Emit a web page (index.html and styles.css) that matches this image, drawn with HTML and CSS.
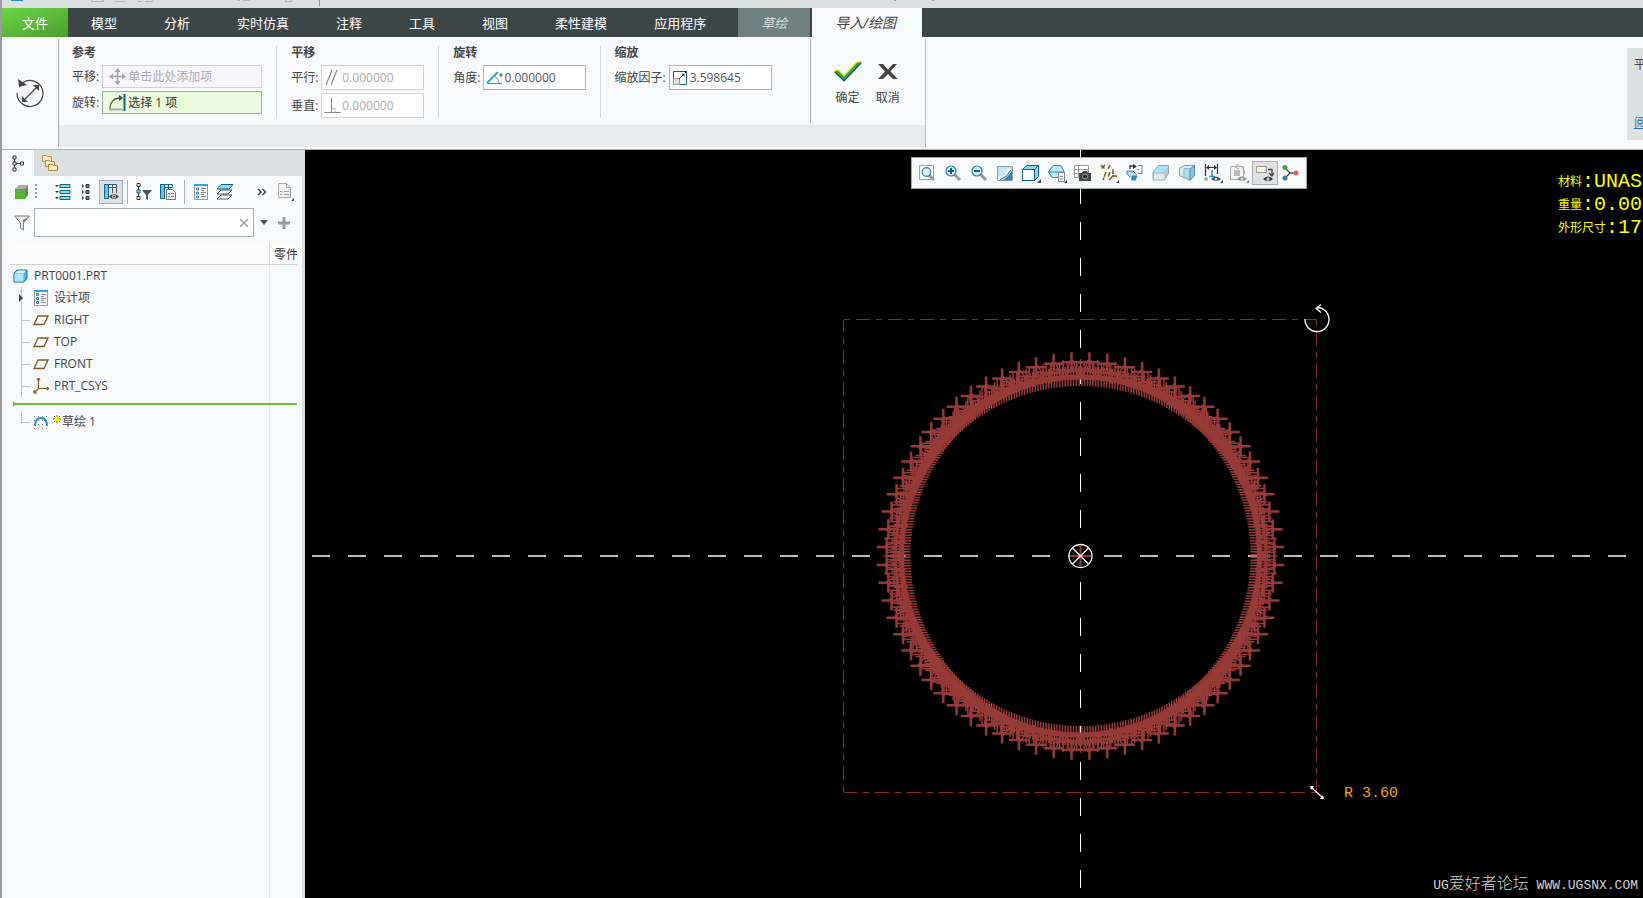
FILE: index.html
```
<!DOCTYPE html>
<html lang="zh-CN">
<head>
    <meta charset="UTF-8">
    <meta name="viewport" content="width=device-width, initial-scale=1.0">
    <title>PRT0001</title>
    <link rel="stylesheet" href="styles.css">
</head>
<body>
    <div class="quick-bar">
        <svg width="960" height="8" aria-hidden="true">
            <path d="M11 0h12v1H11z" fill="#2b8fc0"/>
            <path d="M91.500 0v1.500h12V0M114 1.500h12M138.500 0v1.500h4M145 1.500h8V0M237 .5h3M243 .5h7M285.500 0v1.500h6V0" fill="none" stroke="#b0b4b5"/>
            <path d="M319.500 0v6" stroke="#8d9494"/>
            <path d="M895 0v1M933 0v1" stroke="#555"/>
        </svg>
    </div>

    <nav class="tabs">
        <button class="tab file">文件</button>
        <button class="tab">模型</button>
        <button class="tab">分析</button>
        <button class="tab">实时仿真</button>
        <button class="tab">注释</button>
        <button class="tab">工具</button>
        <button class="tab">视图</button>
        <button class="tab">柔性建模</button>
        <button class="tab">应用程序</button>
        <button class="tab sketch">草绘</button>
        <button class="tab active">导入/绘图</button>
    </nav>

    <header class="ribbon">
        <div class="mode">
            <svg width="30" height="32" viewBox="0 0 30 32" aria-hidden="true">
                <path d="M2 16a13 13 0 1 0 6-10.500" fill="none" stroke="#444" stroke-width="1.200"/>
                <path d="M3 2l9 6-8 2z" fill="#444"/>
                <path d="M10 22L21 11" stroke="#444" stroke-width="1.200"/>
                <path d="M7 25v-6l6 6zM24 8v6l-6-6z" fill="#444"/>
            </svg>
        </div>
        <div class="dashboard">
            <div class="groups">
                <section class="group">
                    <h2>参考</h2>
                    <div class="line">
                        <label for="ref-move">平移:</label>
                        <span class="field wide empty">
                            <svg width="17" height="17" viewBox="0 0 17 17"><path d="M8.500 2v13M2 8.500h13" stroke="#a2a4a8" stroke-width="1.500"/><path d="M8.500 0l3 4h-6zM8.500 17l3-4h-6zM0 8.500l4-3v6zM17 8.500l-4-3v6z" fill="#a2a4a8"/></svg>
                            <input id="ref-move" type="text" value="单击此处添加项">
                        </span>
                    </div>
                    <div class="line">
                        <label for="ref-turn">旋转:</label>
                        <span class="field wide picked">
                            <svg width="17" height="17" viewBox="0 0 17 17"><path d="M1 15c0-7 4-11 10-11" fill="none" stroke="#555" stroke-width="1.300"/><path d="M10 1l4 3-4 3z" fill="#444"/><path d="M15.500 0v17" stroke="#116088" stroke-width="2"/><path d="M0 15.500h14" stroke="#aaa" stroke-width="2"/></svg>
                            <input id="ref-turn" type="text" value="选择 1 项">
                        </span>
                    </div>
                </section>
                <section class="group">
                    <h2>平移</h2>
                    <div class="line">
                        <label for="parallel">平行:</label>
                        <span class="field off">
                            <svg width="17" height="17" viewBox="0 0 17 17"><path d="M2 16L8 1M7 16l6-15" stroke="#888" stroke-width="1.200"/></svg>
                            <input id="parallel" type="text" value="0.000000" disabled>
                        </span>
                    </div>
                    <div class="line">
                        <label for="vertical">垂直:</label>
                        <span class="field off">
                            <svg width="17" height="17" viewBox="0 0 17 17"><path d="M0 15.500h17M7.500 1v14" stroke="#888"/><path d="M8 11.500h3v4" fill="none" stroke="#bbb"/></svg>
                            <input id="vertical" type="text" value="0.000000" disabled>
                        </span>
                    </div>
                </section>
                <section class="group">
                    <h2>旋转</h2>
                    <div class="line">
                        <label for="angle">角度:</label>
                        <span class="field">
                            <svg width="17" height="17" viewBox="0 0 17 17"><path d="M1 14.500h15" stroke="#777"/><path d="M1 14L12 3" stroke="#33a3dc" stroke-width="2"/><path d="M9 7q4 3 4 7" fill="none" stroke="#999"/><circle cx="15" cy="6" r="1.200" fill="none" stroke="#444"/></svg>
                            <input id="angle" type="text" value="0.000000">
                        </span>
                    </div>
                </section>
                <section class="group">
                    <h2>缩放</h2>
                    <div class="line">
                        <label for="scale">缩放因子:</label>
                        <span class="field">
                            <svg width="17" height="17" viewBox="0 0 17 17"><path d="M1.500 2.500h13v13h-13z" fill="#fff" stroke="#116088"/><path d="M1.500 9.500h6v6h-6z" fill="#e4e4e4" stroke="#999"/><path d="M7 10l5-5" stroke="#333"/><path d="M12.500 4.500v3L9.500 4.500zM13 2h2v2h-2z" fill="#222"/></svg>
                            <input id="scale" type="text" value="3.598645">
                        </span>
                    </div>
                </section>
                <div class="confirm">
                    <button>
                        <svg width="28" height="24" viewBox="0 0 28 24"><path d="M0 12l4-2 6 6L23 2h5L10 21z" fill="#3d9a68"/><path d="M0 11l4-1 6 6L23 2h5" fill="none" stroke="#cfe600" stroke-width="1.200"/><path d="M1 12l9 9L27 3" fill="none" stroke="#1d5c3a" stroke-width="1.200"/></svg>
                        确定
                    </button>
                    <button>
                        <svg width="20" height="24" viewBox="0 0 20 24"><path d="M0 4h5l5 5.500L15 4h4l-6.500 7.500L20 19h-5l-5-5-5 5H0l7-7.500z" fill="#444"/></svg>
                        取消
                    </button>
                </div>
            </div>
        </div>
        <aside class="tip">
            <span>平</span>
            <a href="#">阅</a>
        </aside>
    </header>

    <main class="work">
        <div class="side">
            <div class="side-tabs">
                <button class="side-tab on" aria-label="模型树">
                    <svg width="14" height="18" viewBox="0 0 14 18"><path d="M3.500 3v11M4 9.500h7" stroke="#444"/><path d="M2 2h3v3H2zM2 8h3v3H2zM2 14h3v3H2zM9.500 8h3v3h-3z" fill="#fff" stroke="#333"/></svg>
                </button>
                <button class="side-tab" aria-label="文件夹">
                    <svg width="18" height="18" viewBox="0 0 18 18"><g fill="#fce9c0" stroke="#b58a3c"><path d="M1.500 1.500h4l1 1h4v5h-9z"/><path d="M4.500 6.500h4l1 1h4v5h-9z"/><path d="M7.500 10.500h4l1 1h4v5h-9z"/></g></svg>
                </button>
            </div>

            <div class="side-tools">
                <button aria-label="模型"><svg width="22" height="18" viewBox="0 0 22 18"><path d="M0 6l4-4h9l-3 4z" fill="#aaa"/><path d="M10 6l3-4v10l-3 4z" fill="#777"/><path d="M0 6h10v10H0z" fill="#55b435"/><path d="M21 1v16" stroke="#999" stroke-width="2" stroke-dasharray="2 2"/></svg></button>
                <button class="after-gap" aria-label="展开"><svg width="18" height="18" viewBox="0 0 18 18"><path d="M6 1.500h10v3H6zM6 7.500h10v3H6zM6 13.500h10v3H6z" fill="#8fd6f5" stroke="#116088"/><path d="M1 2h4L3 4zM1 8h4l-2 2zM1 14h4l-2 2z" fill="#333"/></svg></button>
                <button aria-label="折叠"><svg width="18" height="18" viewBox="0 0 18 18"><path d="M8 1.500h3v3H8zM8 7.500h3v3H8zM8 13.500h3v3H8z" fill="#777" stroke="#333"/><path d="M4 1l2 2-2 2zM4 7l2 2-2 2zM4 13l2 2-2 2z" fill="#333"/></svg></button>
                <button class="pressed" aria-label="树列"><svg width="18" height="18" viewBox="0 0 18 18"><path d="M2.500 1.500h12v3h-12z" fill="#fff" stroke="#116088"/><path d="M2.500 1.500h4v14h-4z" fill="#5fc4ef" stroke="#116088"/><path d="M6.500 4.500h8V10M10.500 2v8" fill="none" stroke="#555"/><path d="M7 13.500q5-5 10 0-5 5-10 0z" fill="#444"/><circle cx="12" cy="13.500" r="2" fill="#ddd"/><circle cx="12" cy="13.500" r="1" fill="#333"/></svg></button>
                <span class="bar"></span>
                <button aria-label="树过滤器"><svg width="18" height="18" viewBox="0 0 18 18"><path d="M3.500 3v12" stroke="#333"/><path d="M2 .5h3v3H2zM2 13.500h3v3H2z" fill="#fff" stroke="#333"/><path d="M2 7h3v3H2z" fill="#8fd6f5" stroke="#116088"/><path d="M7 7h10l-4 5v5l-2-1v-4z" fill="#555"/></svg></button>
                <button aria-label="树设置"><svg width="18" height="18" viewBox="0 0 18 18"><path d="M1.500 1.500h12v3h-12z" fill="#d8f1fb" stroke="#116088"/><path d="M1.500 1.500h4v14h-4z" fill="#5fc4ef" stroke="#116088"/><path d="M9.500 2v5" stroke="#116088"/><path d="M7.500 6.500h6l3 3v7h-9z" fill="#f4f4f4" stroke="#777"/><path d="M9 10.500h2M12 10.500h3M9 13.500h2M12 13.500h3" stroke="#777"/></svg></button>
                <span class="bar"></span>
                <button aria-label="设计项"><svg width="18" height="18" viewBox="0 0 18 18"><path d="M2.500 1.500h13v15h-13z" fill="#fff" stroke="#999"/><path d="M2 2h14" stroke="#2ea3dc" stroke-width="2"/><path d="M4.500 5h2v2h-2zM4.500 9h2v2h-2zM4.500 13h2v2h-2z" fill="none" stroke="#2183b5"/><path d="M9 5.500h5M9 7.500h3M9 9.500h5M9 11.500h3M9 13.500h5" stroke="#888"/></svg></button>
                <button aria-label="层树"><svg width="18" height="18" viewBox="0 0 18 18"><path d="M1 16l4-4h11l-4 4zM1 11l4-4h11l-4 4z" fill="#fff" stroke="#555"/><path d="M1 6l4-4.500h12L13 6z" fill="#8fdcf8" stroke="#116088"/></svg></button>
                <button class="more" aria-label="更多"><svg width="10" height="8" viewBox="0 0 10 8"><path d="M1 1l3 3-3 3M5.500 1l3 3-3 3" fill="none" stroke="#333" stroke-width="1.300"/></svg></button>
                <button class="last" aria-label="显示"><svg width="18" height="20" viewBox="0 0 18 20"><path d="M1.500 1.500h8l4 4v10h-12z" fill="#f4f4f4" stroke="#a8a8a8"/><path d="M9.500 1.500v4h4" fill="none" stroke="#a8a8a8"/><path d="M3 9.500h2M7 9.500h5M3 12.500h2M7 12.500h5" stroke="#999"/><path d="M17 16v3h-3z" fill="#444"/></svg></button>
            </div>

            <div class="search">
                <svg width="18" height="18" viewBox="0 0 18 18"><path d="M1.500 2h15l-6 7v7l-3-2V9z" fill="#eee" stroke="#777"/><path d="M10 9l5-6-5 3z" fill="#777"/></svg>
                <span class="search-box">
                    <input type="text" aria-label="搜索">
                    <button aria-label="清除"><svg width="8" height="8" viewBox="0 0 8 8"><path d="M0 0l8 8M8 0L0 8" stroke="#999" stroke-width="1.300"/></svg></button>
                </span>
                <button aria-label="选项"><svg width="8" height="5"><path d="M0 0h8L4 5z" fill="#555"/></svg></button>
                <button class="plus" aria-label="添加"><svg width="12" height="12"><path d="M6 0v12M0 6h12" stroke="#9b9b9b" stroke-width="3"/></svg></button>
            </div>

            <div class="tree">
                <div class="tree-head"><span></span><span class="col">零件</span></div>
                <ul class="nodes">
                    <li class="root">
                        <svg width="16" height="16" viewBox="0 0 16 16"><path d="M1 5l3-3h10v8l-3 4H1z" fill="#4fb4dd" stroke="#136a94"/><path d="M1.500 5.500h9v8h-9z" fill="#a8e6fb"/><path d="M2 5l3-2.500h8L11 5z" fill="#d7f5ff"/></svg>
                        PRT0001.PRT
                    </li>
                    <li class="node parent">
                        <svg width="16" height="16" viewBox="0 0 16 16"><path d="M1.500 .5h13v15h-13z" fill="#fff" stroke="#999"/><path d="M1 1h14" stroke="#2ea3dc" stroke-width="2"/><path d="M3.500 3.500h2v2h-2zM3.500 7.500h2v2h-2zM3.500 11.500h2v2h-2z" fill="none" stroke="#2183b5"/><path d="M8 4.500h5M8 6.500h3M8 8.500h5M8 10.500h3M8 12.500h5" stroke="#888"/></svg>
                        设计项
                    </li>
                    <li class="node"><svg width="16" height="16" viewBox="0 0 16 16"><path d="M1 12.500L5 4h10l-4 8.500z" fill="none" stroke="#7d5c22" stroke-width="1.300"/></svg>RIGHT</li>
                    <li class="node"><svg width="16" height="16" viewBox="0 0 16 16"><path d="M1 12.500L5 4h10l-4 8.500z" fill="none" stroke="#7d5c22" stroke-width="1.300"/></svg>TOP</li>
                    <li class="node"><svg width="16" height="16" viewBox="0 0 16 16"><path d="M1 12.500L5 4h10l-4 8.500z" fill="none" stroke="#7d5c22" stroke-width="1.300"/></svg>FRONT</li>
                    <li class="node"><svg width="16" height="16" viewBox="0 0 16 16"><path d="M5.500 0v10.500H16M5.500 10.500L1 15M4 2l1.500-2L7 2M14 9l2 1.500-2 1.500M1 12v3h3" fill="none" stroke="#7d5c22" stroke-width="1.200"/></svg>PRT_CSYS</li>
                </ul>
                <div class="insert-here"></div>
                <ul class="nodes">
                    <li class="node end">
                        <svg width="24" height="16" viewBox="0 0 24 16"><path d="M1 2.500h14M1 6.500h14M1 10.500h14M1 14.500h14" stroke="#888" stroke-dasharray="1 3"/><path d="M2 12q0-8 6-8t6 8" fill="none" stroke="#2590c4" stroke-width="2"/></svg>草绘 1
                        <svg class="spark" width="8" height="8" viewBox="0 0 8 8"><path d="M4 0v8M0 4h8M1 1l6 6M7 1L1 7" stroke="#6a5e00" stroke-width="1"/><path d="M2 2h4v4H2z" fill="#ffee00"/></svg>
                    </li>
                </ul>
            </div>
        </div>

        <div class="graphics">
            <svg class="model" width="100%" height="100%" aria-label="草绘图形">
                <g stroke-dasharray="18" shape-rendering="crispEdges">
                    <path d="M775.500 0V2000" stroke="#fff"/>
                    <path d="M7 406H4000" stroke="#bdbdbd" stroke-width="2"/>
                </g>
                <g fill="none" stroke="#8c2f2d" stroke-width="1" shape-rendering="crispEdges">
                    <path d="M539 169.500h473" stroke-dasharray="6 6 14 6"/>
                    <path d="M1011.500 170v473" stroke-dasharray="6 6 14 6"/>
                    <path d="M539 642.500h473" stroke-dasharray="14 6 6 6" stroke-dashoffset="1"/>
                    <path d="M538.500 170v473" stroke-dasharray="14 6 6 6" stroke-dashoffset="2"/>
                </g>
                <g fill="none" stroke="#963a38">
                    <circle cx="775.500" cy="406" r="179" stroke-width="5"/>
                    <path id="outline" stroke-width="1.500"/>
                    <path id="points" stroke-width="1.500"/>
                    <path id="tips" stroke-width="2.500"/>
                </g>
                <circle cx="775.500" cy="406" r="11.500" fill="#000" stroke="#fff" stroke-width="1.300"/>
                <path d="M775.500 396v20M765 406h21" stroke="#963a38" stroke-width="2"/>
                <path d="M767.500 398l16 16M783.500 398l-16 16" stroke="#fff" stroke-width="1.300"/>
                <path d="M1000 169a12 12 0 1 0 12-11.500M1016 154.500l-5 4 5 4" fill="none" stroke="#fff" stroke-width="1.300"/>
                <path d="M1007 638l10 9" stroke="#fff" stroke-width="1.300"/>
                <path d="M1005 636h4l-3 4zM1019 649h-4l3-4z" fill="#fff"/>
                <text class="radius" x="1039" y="647">R 3.60</text>
            </svg>

            <div class="view-bar">
                <button aria-label="重新调整"><svg width="20" height="20" viewBox="0 0 20 20"><path d="M2.500 2.500h14v14h-14z" fill="#fff" stroke="#9aa4a8"/><path d="M12 12l5 5" stroke="#999" stroke-width="3"/><circle cx="9.500" cy="9" r="4.300" fill="#d8f2fc" stroke="#2b7fa5" stroke-width="1.200"/></svg></button>
                <button aria-label="放大"><svg width="20" height="20" viewBox="0 0 20 20"><path d="M11 11l6 6" stroke="#999" stroke-width="3"/><circle cx="8" cy="8" r="5" fill="#d8f2fc" stroke="#2b7fa5" stroke-width="1.200"/><path d="M5 8h6M8 5v6" stroke="#115f88" stroke-width="2"/></svg></button>
                <button aria-label="缩小"><svg width="20" height="20" viewBox="0 0 20 20"><path d="M11 11l6 6" stroke="#999" stroke-width="3"/><circle cx="8" cy="8" r="5" fill="#d8f2fc" stroke="#2b7fa5" stroke-width="1.200"/><path d="M5 8h6" stroke="#115f88" stroke-width="2"/></svg></button>
                <button aria-label="重画"><svg width="20" height="20" viewBox="0 0 20 20"><path d="M2.500 3.500h15v14h-15z" fill="#c3e6f5" stroke="#8b999e"/><path d="M8 17q6-4 9-9v9z" fill="#2f86ac"/><path d="M3 16q9-3 12-10" fill="none" stroke="#fff" stroke-width="3"/><path d="M5 17q8-4 11-10" fill="none" stroke="#1f6a8e"/></svg></button>
                <button aria-label="显示样式"><svg width="20" height="20" viewBox="0 0 20 20"><path d="M1.500 6.500l4-4h12v11l-4 4h-12z" fill="#8ed3ee" stroke="#115f88"/><path d="M1.500 6.500h12v11h-12z" fill="#fff" stroke="#115f88"/><path d="M13.500 6.500l4-4" stroke="#115f88"/><path d="M20 16v4h-4z" fill="#444"/></svg></button>
                <button aria-label="已保存方向"><svg width="20" height="20" viewBox="0 0 20 20"><path d="M6 2.500h8l3.500 7-3.500 5H5L1.500 9z" fill="#b7e9fa" stroke="#2b88b0"/><path d="M1.500 9H17" fill="none" stroke="#2b88b0"/><path d="M11.500 9.500h6v9h-6z" fill="#f5f5f5" stroke="#888"/><path d="M13 13.500h3M13 16h3" stroke="#888"/><path d="M20 17v3h-3z" fill="#444"/></svg></button>
                <button aria-label="视图管理器"><svg width="20" height="20" viewBox="0 0 20 20"><path d="M1.500 2.500h14v12h-14zM2 6.500h13M2 10.500h13M5.500 3v12" fill="#fff" stroke="#999"/><path d="M6 10h3l1-2h4l1 2h3v8H6z" fill="#444"/><circle cx="12" cy="13.500" r="2.500" fill="#222" stroke="#aaa"/></svg></button>
                <button aria-label="基准显示"><svg width="20" height="20" viewBox="0 0 20 20"><path d="M2 2l4 4M6 2L2 6M11 2l-2 4M7 9l-3 8M11 9l-2 5M10 17l4-4M14 6v7h5" fill="none" stroke="#7d5c22" stroke-width="1.500" stroke-dasharray="5 1"/><path d="M20 17v3h-3z" fill="#444"/></svg></button>
                <button aria-label="旋转中心"><svg width="20" height="20" viewBox="0 0 20 20"><path d="M5 6V3h4" fill="none" stroke="#333" stroke-width="1.300"/><path d="M8 1l4 2.500L8 6z" fill="#333"/><path d="M13 2.500h4v8h-4M12 6.500h2" fill="none" stroke="#888"/><path d="M2 8h6l4 4v3H6l-4-4z" fill="#a6def5" stroke="#2b88b0"/><path d="M6 12h7l-2 6H6z" fill="#2b88b0" stroke="#d4f2fd"/></svg></button>
                <button aria-label="实体"><svg width="20" height="20" viewBox="0 0 20 20"><path d="M2 9l5-6.500h10.500V10l-4 7H2z" fill="#b5cdd8" stroke="#8ba5b0"/><path d="M2.500 9L7 3h10l-4 6z" fill="#a6e3f7"/><path d="M3 11h10v5.500H3z" fill="#e1e9ec"/></svg></button>
                <button aria-label="透视图"><svg width="20" height="20" viewBox="0 0 20 20"><path d="M2.500 5l5-2.500h10v10L13 17.500l-10.500-5z" fill="#d4eef8" stroke="#6fa6bd"/><path d="M7 5.500h6v11L7 14z" fill="#b4dcec" stroke="#8fbdd0"/><path d="M13 6l4.500-3.500v10L13 17z" fill="#8cc4dc" stroke="#4f91ac"/></svg></button>
                <button aria-label="注释显示"><svg width="20" height="20" viewBox="0 0 20 20"><path d="M2.500 1v12M14.500 1v10M4 4.500h9" stroke="#333" stroke-width="1.200"/><path d="M3 4.500L6 2v5zM14 4.500L11 2v5z" fill="#333"/><path d="M9 7v6M6 13.500h6" stroke="#1a92cf" stroke-width="1.500"/><circle cx="3" cy="16" r="2" fill="#aaa"/><path d="M8 16q5-5 10 0-5 4-10 0z" fill="#444"/><circle cx="13" cy="16" r="1.500" fill="#ddd"/><path d="M20 17v3h-3z" fill="#444"/></svg></button>
                <button aria-label="模拟显示"><svg width="20" height="20" viewBox="0 0 20 20"><path d="M1.500 3.500h13v13h-13z" fill="#f5f5f5" stroke="#aaa"/><path d="M5 7h6v6H5z" fill="#bbb"/><path d="M8 3q7-1 8 8M9 1L6 4l4 2" fill="none" stroke="#aaa"/><path d="M8 16q5-5 10 0-5 4-10 0z" fill="#888"/><circle cx="13" cy="16" r="1.500" fill="#ddd"/><path d="M20 17v3h-3z" fill="#777"/></svg></button>
                <button class="pressed" aria-label="草绘显示"><svg width="20" height="20" viewBox="0 0 20 20"><path d="M1.500 3.500h10v6h-10z" fill="#fff3cf" stroke="#999"/><path d="M13 6.500h4v6M14 10l3 3 2-3" fill="none" stroke="#444" stroke-width="1.300"/><path d="M8 16q5-5 10 0-5 4-10 0z" fill="#333"/><circle cx="13" cy="16" r="1.500" fill="#ddd"/></svg></button>
                <button aria-label="连接"><svg width="20" height="20" viewBox="0 0 20 20"><path d="M4 5l5 5-5 5M9 10h6" fill="none" stroke="#444" stroke-width="1.300"/><circle cx="4" cy="4.500" r="2.500" fill="#4b9c4b"/><circle cx="4" cy="15" r="2.500" fill="#2b7fa5"/><circle cx="15" cy="10" r="2.500" fill="#e0605c"/></svg></button>
            </div>

            <div class="mass">
                <div>材料<b>:UNAS</b></div>
                <div>重量<b>:0.00</b></div>
                <div>外形尺寸<b>:17</b></div>
            </div>
            <div class="site"><span>UG</span>爱好者论坛<span> WWW.UGSNX.COM</span></div>
        </div>
    </main>

    <script>
        // imported gear: tooth outline plus a small upright cross on every sketch point
        const teeth = 68, cx = 775.5, cy = 406, arm = 10;

        function at(i, t, r) {
            const a = (i + 0.5 + t) * 2 * Math.PI / teeth;
            return [cx + r * Math.sin(a), cy - r * Math.cos(a)];
        }
        function cross([x, y]) {
            return `M${x - arm} ${y}h${arm * 2}M${x} ${y - arm}v${arm * 2}`;
        }

        const roots = [-0.42, -0.25, -0.08, 0.08, 0.25, 0.42];
        const flanks = [-0.28, 0.28];
        let outline = "", points = "", tips = "";
        for (let i = 0; i < teeth; i++) {
            outline += `M${at(i, -0.4, 180)}L${at(i, -0.1, 195)}L${at(i, 0.1, 195)}L${at(i, 0.4, 180)}`;
            roots.forEach(t => points += cross(at(i, t, 180)));
            flanks.forEach(t => points += cross(at(i, t, 185)));
            points += cross(at(i, 0.5, 187));
            tips += cross(at(i, 0, 194));
        }
        document.getElementById("outline").setAttribute("d", outline);
        document.getElementById("points").setAttribute("d", points);
        document.getElementById("tips").setAttribute("d", tips);
    </script>
</body>
</html>
```
FILE: styles.css
```
* {
    box-sizing: border-box;
}
body {
    display: flex;
    flex-direction: column;
    height: 100vh;
    margin: 0;
    border-left: 2px solid #9c9c9e;
    background: #f8f9fb;
    color: #444;
    font-family: "Open Sans", "Noto Sans CJK SC", sans-serif;
    font-size: 12px;
    line-height: 16px;
    overflow: hidden;
}
button {
    padding: 0;
    border: none;
    background: none;
    color: inherit;
    font: inherit;
}
svg {
    display: block;
    flex: none;
}
h2, ul {
    margin: 0;
    padding: 0;
}
.quick-bar {
    height: 8px;
    margin-left: -2px;
    background: #d9e0df;
}

/* tabs */
.tabs {
    display: flex;
    flex: none;
    gap: 1px;
    height: 29px;
    background: #3d4647;
}
.tab {
    padding: 0 23px;
    color: #fff;
    font-size: 13px;
    white-space: nowrap;
}
.tab.file {
    margin-right: -1px;
    padding: 0 20px;
    background: linear-gradient(160deg, #69d743, #4e9d30);
}
.tab.sketch {
    margin-left: 8px;
    background: #6f8081;
    color: #d5dcdc;
    font-style: italic;
}
.tab.active {
    margin-left: 1px;
    padding: 0 26px 0 23px;
    background: #f8f9fb;
    color: #444;
    font-size: 14px;
    font-style: italic;
}

/* ribbon */
.ribbon {
    display: flex;
    flex: none;
    height: 113px;
    border-bottom: 1px solid #a9b5b5;
}
.mode {
    display: flex;
    align-items: center;
    justify-content: center;
    width: 57px;
    margin: 2px 0;
    border-right: 1px solid #aaa;
}
.dashboard {
    margin: 2px 0;
    padding: 0 1px;
    border-right: 1px solid #b5b8ba;
    background: linear-gradient(#f8f9fb 86px, #e9eaeb 86px);
}
.groups {
    display: flex;
    height: 84px;
}
.group {
    position: relative;
    padding: 6px 14px 0 12px;
}
.group + .group {
    padding: 6px 14px 0;
}
.group:not(:nth-child(4)) {
    border-right: 1px solid transparent;
    border-image: linear-gradient(transparent 8px, #d5d8db 8px, #d5d8db 78px, transparent 78px) 1;
}
.group:nth-child(4) {
    padding: 6px 38px 0 13px;
}
.group h2 {
    margin-bottom: 4px;
    font-size: 12px;
    line-height: 16px;
}
.line {
    display: flex;
    align-items: center;
    gap: 3px;
    margin-bottom: 3px;
}
.field {
    display: flex;
    align-items: center;
    gap: 1px;
    width: 103px;
    height: 25px;
    padding: 0 2px;
    border: 1px solid #b0b2b4;
    background: #fff;
}
.field input {
    width: 100%;
    min-width: 0;
    padding: 0;
    border: none;
    background: none;
    color: #555;
    font: inherit;
}
.field.off {
    border-color: #cfd1d3;
}
.field.off input {
    color: #aaa;
}
.field.wide {
    gap: 2px;
    width: 160px;
    height: 23px;
    padding: 0 6px;
}
.field.empty {
    border-color: #cfd1d3;
    background: #f8f5fc;
}
.field.empty input {
    color: #aaa;
}
.field.picked {
    border-color: #a6a9ab;
    background: #eafbdd;
}
.field.picked input {
    color: #333;
}
.confirm {
    display: flex;
    gap: 14px;
    padding: 21px 24px 0 23px;
    border-left: 1px solid #aaa;
}
.confirm button {
    display: flex;
    flex-direction: column;
    align-items: center;
    gap: 6px;
}
.tip {
    display: flex;
    flex-direction: column;
    justify-content: space-between;
    width: 16px;
    margin: 11px 0 9px auto;
    padding: 9px 0 9px 7px;
    background: #dfe0e2;
    overflow: hidden;
}
.tip a {
    color: #1a6fa8;
}

/* model tree */
.work {
    display: flex;
    flex: 1;
    min-height: 0;
}
.side {
    display: flex;
    flex: none;
    flex-direction: column;
    width: 303px;
    border-right: 3px solid #d9e0df;
}
.side-tabs {
    display: flex;
    height: 26px;
    margin-right: -3px;
    background: #d9e0df;
}
.side-tab {
    display: flex;
    align-items: center;
    justify-content: center;
    width: 32px;
}
.side-tab.on {
    background: #f8f9fb;
}
.side-tools {
    display: flex;
    align-items: center;
    height: 32px;
    padding-left: 12px;
}
.side-tools button {
    display: flex;
    flex: none;
    align-items: center;
    justify-content: center;
    width: 24px;
    height: 24px;
}
.side-tools .after-gap {
    margin-left: 13px;
}
.side-tools .bar {
    flex: none;
    width: 1px;
    height: 24px;
    margin: 0 4px;
    background: #a9b0b3;
}
.side-tools .more {
    margin-left: 13px;
}
.side-tools .last {
    margin-left: auto;
    margin-right: 4px;
}
.pressed {
    border: 1px solid #a9adb0;
    background: #dfe0e2;
}
.search {
    display: flex;
    align-items: center;
    height: 29px;
    padding-left: 11px;
    gap: 6px;
}
.search-box {
    display: flex;
    align-items: center;
    width: 220px;
    height: 29px;
    margin-left: -3px;
    padding-right: 5px;
    border: 1px solid #a3aeb3;
    background: #fff;
}
.search-box input {
    flex: 1;
    min-width: 0;
    border: none;
    background: none;
}
.search .plus {
    margin-left: 4px;
}
.tree {
    flex: 1;
    margin: 5px 5px 0 8px;
    background: linear-gradient(#e6e8ea, #e6e8ea) 259px 0 / 1px 100% no-repeat;
}
.tree-head {
    display: flex;
    height: 23px;
    border-bottom: 1px solid #cfd2d4;
    background: #fbfbfb;
    color: #333;
    overflow: hidden;
}
.tree-head span:first-child {
    flex: none;
    width: 260px;
    border-right: 1px solid #cfd2d4;
}
.tree-head .col {
    padding: 5px 0 0 4px;
    white-space: nowrap;
}
.nodes {
    list-style: none;
}
.nodes li {
    display: flex;
    align-items: center;
    height: 22px;
}
.nodes .root {
    gap: 5px;
    padding-left: 3px;
}
.nodes .node {
    position: relative;
    gap: 5px;
    padding-left: 23px;
}
.node::before {
    content: "";
    position: absolute;
    left: 11px;
    top: 0;
    width: 1px;
    height: 100%;
    background: #c2c5c7;
}
.node::after {
    content: "";
    position: absolute;
    left: 11px;
    top: 11px;
    width: 9px;
    height: 1px;
    background: #c2c5c7;
}
.node.parent::after {
    left: 9px;
    top: 7px;
    width: 0;
    height: 0;
    border: 4px solid transparent;
    border-left-color: #444;
    background: none;
}
.node.end::before {
    height: 11px;
}
.nodes .end {
    gap: 5px;
}
.spark {
    position: absolute;
    left: 43px;
    top: 4px;
}
.insert-here {
    height: 2px;
    margin: 6px 0 6px 3px;
    background: #62c044;
}
.insert-here::before {
    content: "";
    display: block;
    width: 0;
    border: 3px solid transparent;
    border-left-color: #62c044;
    transform: translateY(-2px);
}

/* graphics window */
.graphics {
    position: relative;
    flex: 1;
    min-width: 0;
    background: #000;
    overflow: hidden;
}
.model {
    position: absolute;
    inset: 0;
}
.radius {
    fill: #f2a600;
    font-family: "Liberation Mono", monospace;
    font-size: 15px;
}
.view-bar {
    position: absolute;
    left: 606px;
    top: 7px;
    display: flex;
    align-items: center;
    height: 32px;
    padding: 0 2px;
    border: 1px solid #a5acac;
    background: #f8f9fb;
}
.view-bar button {
    display: flex;
    align-items: center;
    justify-content: center;
    width: 26px;
    height: 24px;
}
.mass {
    position: absolute;
    right: 0;
    top: 20px;
    width: 85px;
    color: #ffff00;
    white-space: nowrap;
    overflow: hidden;
}
.mass div {
    display: flex;
    align-items: center;
    height: 23px;
}
.mass b {
    font-family: "Liberation Mono", monospace;
    font-size: 20px;
    font-weight: normal;
}
.site {
    position: absolute;
    right: 5px;
    bottom: 2px;
    color: #d4d4d4;
    font-family: "Noto Sans CJK SC", sans-serif;
    font-size: 16px;
    font-weight: 300;
    line-height: 20px;
    white-space: pre;
}
.site span {
    font-family: "Liberation Mono", monospace;
    font-size: 13px;
}
```
